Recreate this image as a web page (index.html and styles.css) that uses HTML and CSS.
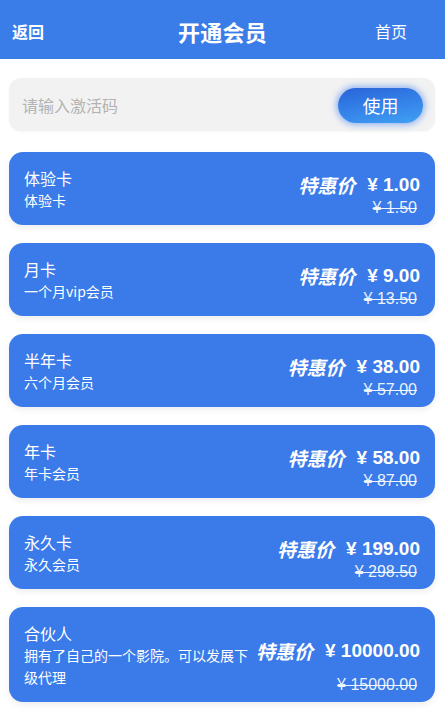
FILE: index.html
```html
<!DOCTYPE html>
<html lang="zh-CN">
<head>
<meta charset="utf-8">
<title>开通会员</title>
<link rel="stylesheet" href="styles.css">
</head>
<body>
<header class="topbar">
  <span class="nav-left">返回</span>
  <span class="title">开通会员</span>
  <span class="nav-right">首页</span>
</header>

<div class="code-box">
  <span class="placeholder">请输入激活码</span>
  <button class="use-btn">使用</button>
</div>

<main class="cards">
  <div class="card">
    <div class="info"><div class="name">体验卡</div><div class="desc">体验卡</div></div>
    <div class="price"><div class="now"><span class="tag">特惠价</span><span class="num">¥ 1.00</span></div><div class="old">¥ 1.50</div></div>
  </div>
  <div class="card">
    <div class="info"><div class="name">月卡</div><div class="desc">一个月vip会员</div></div>
    <div class="price"><div class="now"><span class="tag">特惠价</span><span class="num">¥ 9.00</span></div><div class="old">¥ 13.50</div></div>
  </div>
  <div class="card">
    <div class="info"><div class="name">半年卡</div><div class="desc">六个月会员</div></div>
    <div class="price"><div class="now"><span class="tag">特惠价</span><span class="num">¥ 38.00</span></div><div class="old">¥ 57.00</div></div>
  </div>
  <div class="card">
    <div class="info"><div class="name">年卡</div><div class="desc">年卡会员</div></div>
    <div class="price"><div class="now"><span class="tag">特惠价</span><span class="num">¥ 58.00</span></div><div class="old">¥ 87.00</div></div>
  </div>
  <div class="card">
    <div class="info"><div class="name">永久卡</div><div class="desc">永久会员</div></div>
    <div class="price"><div class="now"><span class="tag">特惠价</span><span class="num">¥ 199.00</span></div><div class="old">¥ 298.50</div></div>
  </div>
  <div class="card card-wide">
    <div class="info info-narrow"><div class="name">合伙人</div><div class="desc">拥有了自己的一个影院。可以发展下级代理</div></div>
    <div class="price"><div class="now"><span class="tag">特惠价</span><span class="num">¥ 10000.00</span></div><div class="old">¥ 15000.00</div></div>
  </div>
</main>
</body>
</html>
```

FILE: styles.css
```css
* { box-sizing: border-box; }
body {
  margin: 0;
  background: #ffffff;
  font-family: "Noto Sans CJK SC", "Noto Sans", sans-serif;
  color: #fff;
}
.topbar {
  height: 59px;
  background: #3a7de9;
  display: grid;
  grid-template-columns: 1fr auto 1fr;
  align-items: center;
  padding: 2px 12px 0 12px;
}
.nav-left { font-size: 16px; font-weight: 700; }
.title { font-size: 22px; font-weight: 700; letter-spacing: 0.3px; }
.nav-right { font-size: 16px; justify-self: end; margin-right: 26px; }

.code-box {
  margin: 19px 10px 0 9px;
  height: 53px;
  background: #f2f2f2;
  border-radius: 12px;
  display: flex;
  align-items: center;
  justify-content: space-between;
  padding: 0 12px 0 13px;
  box-shadow: 0 1px 3px rgba(0,0,0,0.04);
}
.placeholder { color: #b2b2b2; font-size: 16px; }
.use-btn {
  width: 85px;
  height: 35px;
  border: none;
  border-radius: 18px;
  background: linear-gradient(170deg, #2a63d8 0%, #3585ea 55%, #41a0f2 100%);
  color: #fff;
  font-family: inherit;
  font-size: 18px;
  box-shadow: 0 0 6px 2px rgba(70,130,240,0.55);
  margin-top: 1px;
}

.cards {
  display: flex;
  flex-direction: column;
  gap: 18px;
  padding: 21px 10px 10px 9px;
}
.card {
  background: #3a7ae9;
  border-radius: 14px;
  min-height: 73px;
  display: flex;
  justify-content: space-between;
  padding: 0 15px 0 15px;
  box-shadow: 0 3px 6px rgba(0,0,0,0.07);
}
.card-wide { min-height: 95px; }
.info { padding: 15px 0 14px; }
.info-narrow { width: 232px; flex: none; }
.name { font-size: 16px; line-height: 22px; }
.desc { font-size: 14px; line-height: 22px; }
.price {
  display: grid;
  grid-template-rows: 1fr auto 1fr;
  justify-items: end;
  padding-bottom: 8px;
  flex: none;
}
.now {
  grid-row: 2;
  display: flex;
  align-items: center;
  gap: 12px;
  line-height: 22px;
}
.tag { font-size: 19px; font-style: italic; font-weight: 700; }
.num { font-family: "Liberation Sans", Arial, sans-serif; font-size: 19px; font-weight: 700; }
.old {
  grid-row: 3;
  align-self: end;
  font-family: "Liberation Sans", Arial, sans-serif;
  font-size: 16px;
  line-height: 18px;
  text-decoration: line-through;
  margin-right: 3px;
  color: rgba(255,255,255,0.92);
}
```
